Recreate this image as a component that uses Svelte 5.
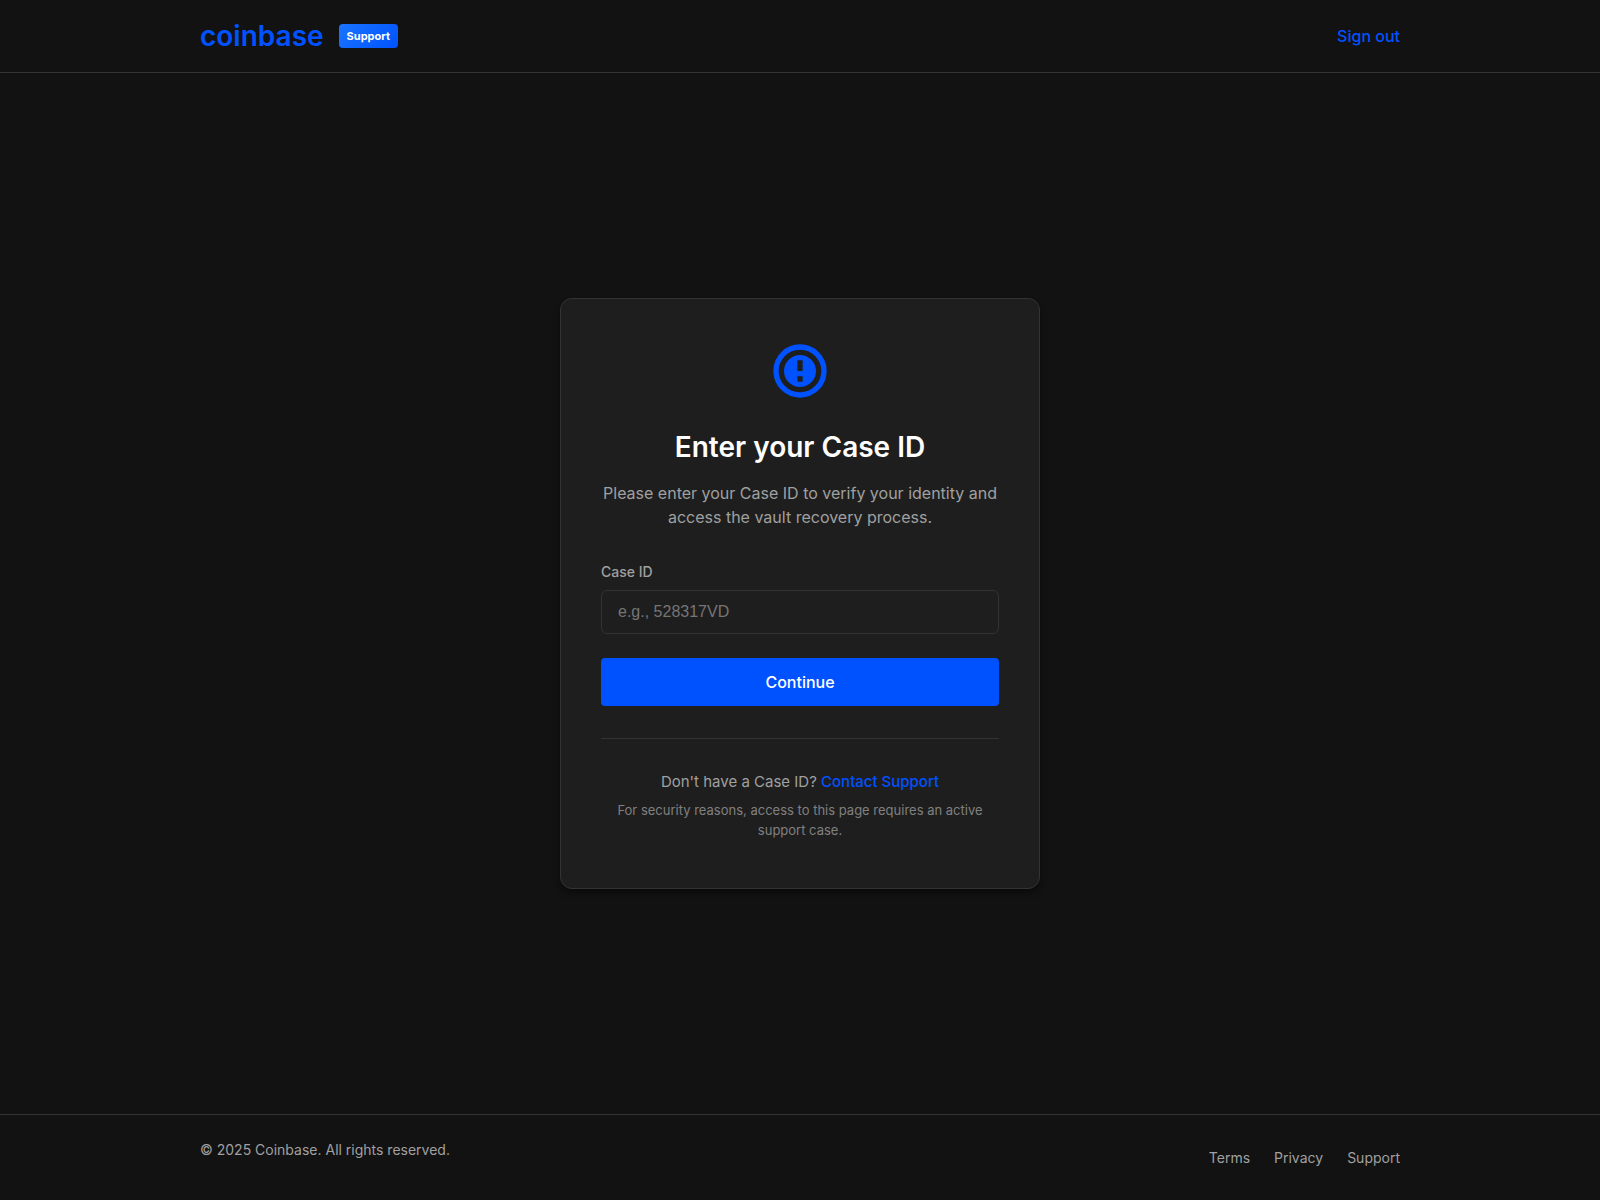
<script>
  let caseId = "";

  const footerLinks = ["Terms", "Privacy", "Support"];
</script>

<div class="page">
  <header>
    <div class="container header-row">
      <div class="brand">
        <span class="logo">coinbase</span>
        <span class="badge">Support</span>
      </div>
      <a class="sign-out" href="#top">Sign out</a>
    </div>
  </header>

  <main>
    <section class="card">
      <svg class="icon" viewBox="0 0 24 24" aria-hidden="true">
        <circle cx="12" cy="12" r="9" fill="none" stroke="currentColor" stroke-width="2" />
        <path
          fill="currentColor"
          fill-rule="evenodd"
          d="M12 6a6 6 0 1 0 0 12a6 6 0 0 0 0-12zM11 8h2v4h-2zM11 14h2v2h-2z"
        />
      </svg>
      <h1>Enter your Case ID</h1>
      <p class="intro">
        Please enter your Case ID to verify your identity and access the vault recovery process.
      </p>

      <!-- layout only, nothing is sent -->
      <form on:submit|preventDefault>
        <label for="case-id">Case ID</label>
        <input id="case-id" type="text" placeholder="e.g., 528317VD" bind:value={caseId} />
        <button type="submit">Continue</button>
      </form>

      <div class="help">
        <p class="contact">Don't have a Case ID? <a href="#top">Contact Support</a></p>
        <p class="note">
          For security reasons, access to this page requires an active support case.
        </p>
      </div>
    </section>
  </main>

  <footer>
    <div class="container footer-row">
      <p>© 2025 Coinbase. All rights reserved.</p>
      <nav>
        {#each footerLinks as link}
          <a href="#top">{link}</a>
        {/each}
      </nav>
    </div>
  </footer>
</div>

<style>
  :global(body) {
    background-color: #121212;
  }
  .page {
    --blue: #0052ff;
    --border: #333333;
    --muted: #a0a0a0;
    min-height: 100vh;
    display: flex;
    flex-direction: column;
    font-family: Inter, "Liberation Sans", sans-serif;
    font-size: 16px;
    line-height: 24px;
    color: #ffffff;
  }
  .page * {
    box-sizing: border-box;
  }
  h1,
  p {
    margin: 0;
  }
  a {
    color: var(--blue);
    font-weight: 500;
    text-decoration: none;
  }
  .container {
    width: 100%;
    max-width: 1200px;
    margin: 0 auto;
    display: flex;
    align-items: center;
    justify-content: space-between;
  }
  header {
    padding: 20px 24px;
    border-bottom: 1px solid var(--border);
  }
  .header-row {
    height: 32px;
  }
  .brand {
    display: flex;
    align-items: center;
    gap: 15px;
  }
  .logo {
    color: var(--blue);
    font-size: 28px;
    font-weight: 600;
    line-height: 32px;
  }
  .badge {
    padding: 4px 8px;
    border-radius: 4px;
    background: linear-gradient(135deg, #1a75ff, #0052ff);
    font-size: 11px;
    font-weight: 700;
    line-height: 16px;
  }
  main {
    flex: 1;
    display: flex;
    align-items: center;
    justify-content: center;
    padding: 40px 20px;
  }
  .card {
    width: 100%;
    max-width: 480px;
    padding: 40px;
    border: 1px solid var(--border);
    border-radius: 12px;
    background-color: #1e1e1e;
    box-shadow: 0 4px 6px rgba(0, 0, 0, 0.4);
    text-align: center;
  }
  .icon {
    display: block;
    width: 64px;
    height: 64px;
    margin: 0 auto 24px;
    color: var(--blue);
  }
  h1 {
    margin-bottom: 14px;
    font-size: 28px;
    font-weight: 600;
    line-height: 40px;
  }
  .intro {
    margin-bottom: 32px;
    color: var(--muted);
  }
  form {
    display: flex;
    flex-direction: column;
  }
  label {
    margin-bottom: 8px;
    color: var(--muted);
    font-size: 14px;
    font-weight: 500;
    line-height: 21px;
    text-align: left;
  }
  input {
    height: 44px;
    margin-bottom: 24px;
    padding: 0 16px;
    border: 1px solid var(--border);
    border-radius: 6px;
    background-color: #1e1e1e;
    color: #ffffff;
    font-family: "Liberation Sans", Arial, sans-serif;
    font-size: 16px;
  }
  input::placeholder {
    color: #757575;
  }
  button {
    height: 48px;
    border: none;
    border-radius: 4px;
    background-color: var(--blue);
    color: #ffffff;
    font-family: inherit;
    font-size: 16px;
    font-weight: 500;
    cursor: pointer;
  }
  .help {
    margin-top: 32px;
    padding: 32px 0 8px;
    border-top: 1px solid var(--border);
  }
  .contact {
    margin-bottom: 8px;
    color: var(--muted);
    font-size: 15px;
    line-height: 21px;
  }
  .note {
    color: #808080;
    font-size: 13px;
    line-height: 20px;
  }
  footer {
    padding: 24px;
    border-top: 1px solid var(--border);
    color: var(--muted);
    font-size: 14px;
    line-height: 21px;
  }
  .footer-row p {
    margin-bottom: 16px;
  }
  nav {
    display: flex;
    gap: 24px;
  }
  nav a {
    color: var(--muted);
    font-weight: 400;
  }
</style>
